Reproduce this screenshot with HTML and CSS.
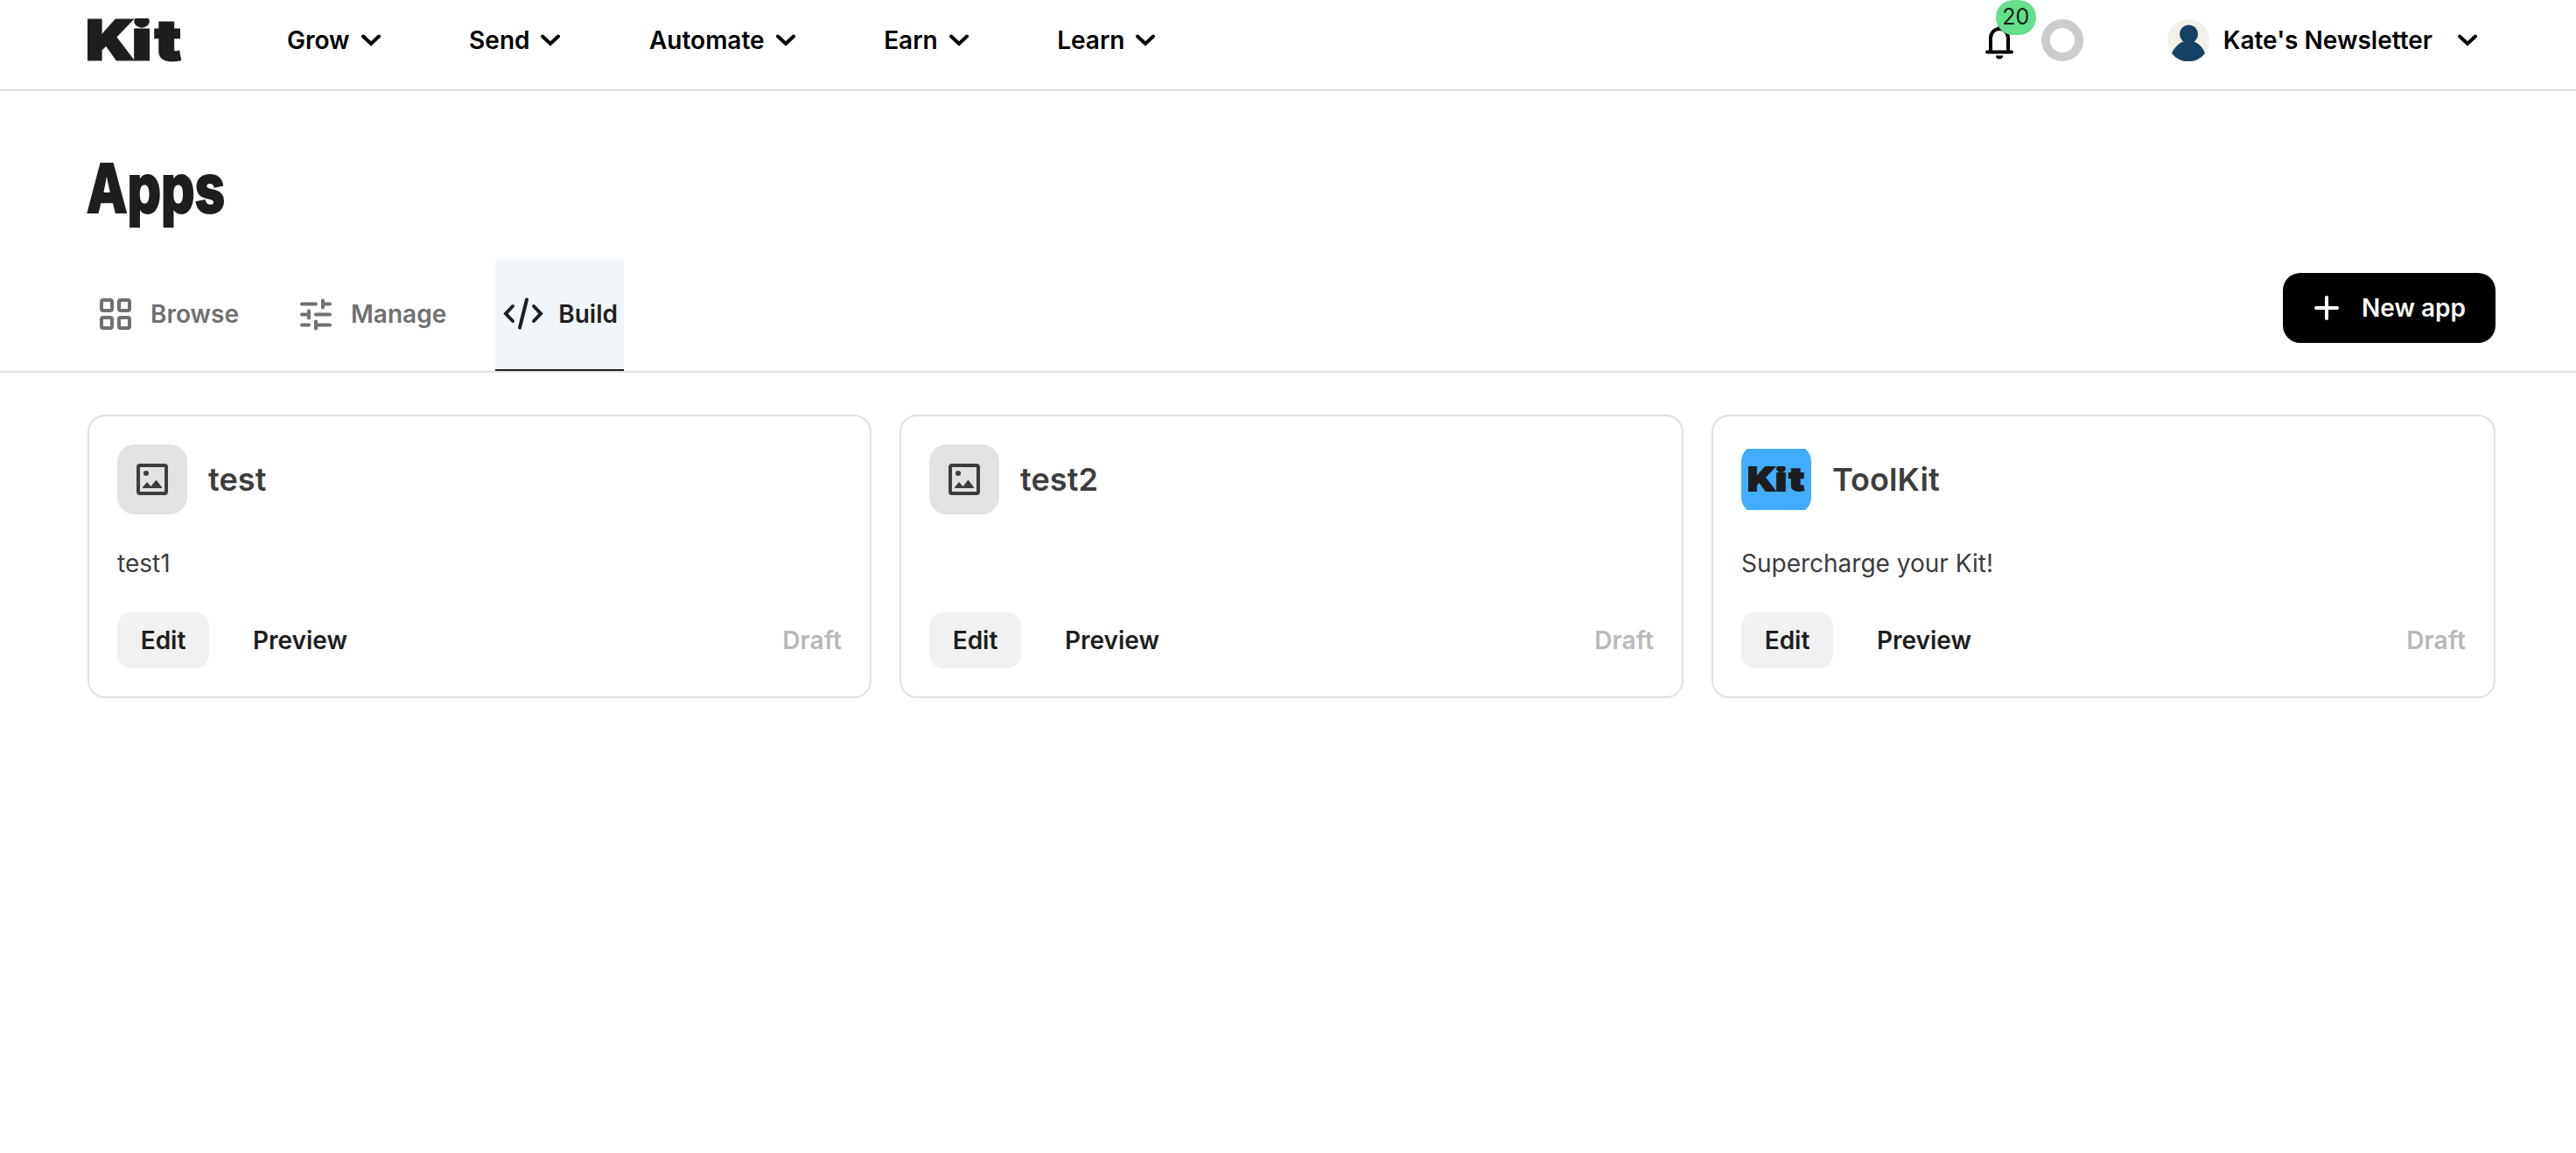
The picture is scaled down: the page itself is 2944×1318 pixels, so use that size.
FILE: index.html
```
<!DOCTYPE html>
<html lang="en">
<head>
    <meta charset="UTF-8">
    <meta name="viewport" content="width=device-width, initial-scale=1.0">
    <title>Apps</title>
    <link rel="stylesheet" href="styles.css">
</head>
<body>
    <svg class="sprite">
        <symbol id="chevron" viewBox="0 0 22 14">
            <path d="M2 2.500 L11 11 L20 2.500" fill="none" stroke="currentColor" stroke-width="4" stroke-linecap="round" stroke-linejoin="miter"/>
        </symbol>
        <symbol id="image" viewBox="0 0 36 36">
            <rect x="2" y="2" width="32" height="32" rx="2" fill="none" stroke="currentColor" stroke-width="4"/>
            <circle cx="11" cy="11" r="3" fill="currentColor"/>
            <path d="M7 27 L12 21 L16.5 26 L22.500 18.500 L29 27 V28 H7 Z" fill="currentColor"/>
        </symbol>
        <symbol id="kit" viewBox="0 0 108 50">
            <text class="kit-text" x="-2.500 43.500 65.500" y="46.500" transform="scale(1.18 1)">Kit</text>
        </symbol>
    </svg>

    <header class="header">
        <a class="logo" href="#"><svg width="108" height="50"><use href="#kit"/></svg></a>
        <nav class="nav">
            <a class="nav-item" href="#">Grow <svg class="chevron"><use href="#chevron"/></svg></a>
            <a class="nav-item" href="#">Send <svg class="chevron"><use href="#chevron"/></svg></a>
            <a class="nav-item" href="#">Automate <svg class="chevron"><use href="#chevron"/></svg></a>
            <a class="nav-item" href="#">Earn <svg class="chevron"><use href="#chevron"/></svg></a>
            <a class="nav-item" href="#">Learn <svg class="chevron"><use href="#chevron"/></svg></a>
        </nav>
        <div class="bell">
            <svg width="32" height="38" viewBox="0 0 32 38">
                <path d="M6 29 V13.500 A10 10.500 0 0 1 26 13.500 V29" fill="none" stroke="#000" stroke-width="4"/>
                <path d="M2 29.500 H30" stroke="#000" stroke-width="4" stroke-linecap="round"/>
                <path d="M12 33.500 H20 A4 4 0 0 1 12 33.500 Z" fill="#000"/>
                <path d="M16 0 V4" stroke="#000" stroke-width="4"/>
            </svg>
            <span class="badge">20</span>
        </div>
        <div class="ring"></div>
        <div class="account">
            <svg class="avatar" viewBox="0 0 48 48">
                <circle cx="24" cy="24" r="24" fill="#f3f0ea"/>
                <circle cx="24.500" cy="17" r="10.500" fill="#144264"/>
                <path d="M5 39 C8 32 13 27.500 18 25.500 H30 C36 27.500 40.500 32 43 39 A24 24 0 0 1 5 39 Z" fill="#144264"/>
            </svg>
            <span class="account-name">Kate's Newsletter</span>
            <svg class="chevron"><use href="#chevron"/></svg>
        </div>
    </header>

    <h1 class="title"><span>Apps</span></h1>

    <div class="toolbar">
        <div class="tabs">
            <a class="tab" href="#">
                <svg class="tab-icon" viewBox="0 0 48 48" fill="none" stroke="currentColor" stroke-width="4">
                    <rect x="8" y="8" width="12" height="12" rx="2"/>
                    <rect x="28" y="8" width="12" height="12" rx="2"/>
                    <rect x="8" y="28" width="12" height="12" rx="2"/>
                    <rect x="28" y="28" width="12" height="12" rx="2"/>
                </svg>
                Browse
            </a>
            <a class="tab" href="#">
                <svg class="tab-icon" viewBox="0 0 48 48" fill="none" stroke="currentColor" stroke-width="4" stroke-linecap="round">
                    <path d="M8 12.500 H24 M32 8.500 V16.500 M32 12.500 H40"/>
                    <path d="M8 24.500 H16 M16 20.500 V28.500 M24 24.500 H40"/>
                    <path d="M8 36.500 H16 M24 32.500 V40.500 M24 36.500 H40"/>
                </svg>
                Manage
            </a>
            <a class="tab active" href="#">
                <svg class="tab-icon" viewBox="0 0 48 48" fill="none" stroke="currentColor" stroke-width="4" stroke-linecap="round">
                    <path d="M12 15 L4 23.500 L12 32"/>
                    <path d="M28 7.500 L20 39.500"/>
                    <path d="M36 15 L44 23.500 L36 32"/>
                </svg>
                Build
            </a>
        </div>
        <button class="new-app">
            <svg width="28" height="28" viewBox="0 0 28 28"><path d="M14 2 V26 M2 14 H26" stroke="#fff" stroke-width="4" stroke-linecap="round"/></svg>
            New app
        </button>
    </div>

    <main class="cards">
        <div class="card">
            <div class="card-head">
                <div class="card-icon"><svg width="36" height="36"><use href="#image"/></svg></div>
                <h2>test</h2>
            </div>
            <p class="card-text">test1</p>
            <div class="card-foot">
                <button class="edit">Edit</button>
                <button class="preview">Preview</button>
                <span class="status">Draft</span>
            </div>
        </div>
        <div class="card">
            <div class="card-head">
                <div class="card-icon"><svg width="36" height="36"><use href="#image"/></svg></div>
                <h2>test2</h2>
            </div>
            <p class="card-text"></p>
            <div class="card-foot">
                <button class="edit">Edit</button>
                <button class="preview">Preview</button>
                <span class="status">Draft</span>
            </div>
        </div>
        <div class="card">
            <div class="card-head">
                <div class="card-icon card-icon-kit">
                    <div class="kit-tile"><svg width="65" height="30"><use href="#kit"/></svg></div>
                </div>
                <h2>ToolKit</h2>
            </div>
            <p class="card-text">Supercharge your Kit!</p>
            <div class="card-foot">
                <button class="edit">Edit</button>
                <button class="preview">Preview</button>
                <span class="status">Draft</span>
            </div>
        </div>
    </main>
</body>
</html>
```
FILE: styles.css
```
* {
    box-sizing: border-box;
}
body {
    margin: 0;
    font-family: Inter, sans-serif;
    font-size: 28px;
    color: #1e1e1e;
    background: #fff;
}
a {
    color: inherit;
    text-decoration: none;
}
svg {
    display: block;
    flex-shrink: 0;
}
.sprite {
    display: none;
}
.kit-text {
    font-family: Inter, sans-serif;
    font-size: 62px;
    font-weight: 900;
    fill: #1e1e1e;
    stroke: #1e1e1e;
    stroke-width: 3px;
}

/* header */
.header {
    display: flex;
    align-items: center;
    height: 104px;
    padding: 0 113px 10px 100px;
    border-bottom: 2px solid #e1e1e1;
    font-weight: 600;
    color: #000;
}
.logo {
    margin-right: 120px;
}
.nav {
    display: flex;
    gap: 101.5px;
}
.nav-item {
    display: flex;
    align-items: center;
    gap: 13px;
}
.chevron {
    width: 22px;
    height: 14px;
}
.bell {
    position: relative;
    margin-left: auto;
    padding-top: 5px;
}
.badge {
    position: absolute;
    left: 12px;
    top: -25px;
    width: 46px;
    height: 40px;
    border-radius: 20px;
    background: #64df8a;
    color: #1e1e1e;
    font-size: 25px;
    font-weight: 400;
    line-height: 39px;
    text-align: center;
}
.ring {
    width: 48px;
    height: 48px;
    margin: 0 96px 0 32px;
    border: 10px solid #ccc;
    border-radius: 50%;
}
.account {
    display: flex;
    align-items: center;
}
.avatar {
    width: 48px;
    height: 48px;
}
.account-name {
    margin: 0 29px 0 16px;
}

/* title */
.title {
    margin: 0;
    padding: 63px 99px 0;
    height: 192px;
    font-size: 77px;
    font-weight: 800;
    line-height: 96px;
    -webkit-text-stroke: 2px #1e1e1e;
}
.title span {
    display: inline-block;
    transform: scaleX(0.785);
    transform-origin: left;
}

/* tabs */
.toolbar {
    display: flex;
    justify-content: space-between;
    height: 130px;
    padding: 0 92px 0 100px;
    border-bottom: 2px solid #e1e1e1;
}
.tabs {
    display: flex;
    gap: 49px;
}
.tab {
    display: flex;
    align-items: center;
    gap: 16px;
    padding: 0 7px 0 8px;
    border-bottom: 2px solid transparent;
    font-weight: 600;
    color: #707070;
}
.tab.active {
    background: #f1f6fa;
    border-color: #1e1e1e;
    color: #1e1e1e;
}
.tab-icon {
    width: 48px;
    height: 48px;
}
button {
    border: none;
    font: inherit;
    font-weight: 600;
}
.new-app {
    display: flex;
    align-items: center;
    gap: 26px;
    width: 243px;
    height: 80px;
    margin-top: 16px;
    padding: 0 0 0 36px;
    border-radius: 20px;
    background: #000;
    color: #fff;
}

/* cards */
.cards {
    display: grid;
    grid-template-columns: repeat(3, 1fr);
    gap: 32px;
    padding: 48px 92px 0 100px;
}
.card {
    height: 324px;
    padding: 32px;
    border: 2px solid #e1e1e1;
    border-radius: 20px;
}
.card-head {
    display: flex;
    align-items: center;
    gap: 24px;
}
.card-head h2 {
    margin: 0;
    font-size: 36px;
    font-weight: 600;
    letter-spacing: 0.1px;
    color: #3d3d3d;
}
.card-icon {
    display: flex;
    align-items: center;
    justify-content: center;
    width: 80px;
    height: 80px;
    border-radius: 20px;
    background: #e2e2e2;
    color: #3d3d3d;
    overflow: hidden;
}
.card-icon-kit {
    background: none;
}
.kit-tile {
    display: flex;
    align-items: center;
    justify-content: center;
    width: 80px;
    height: 70px;
    background: #42adff;
}
.card-text {
    height: 40px;
    margin: 36px 0;
    line-height: 40px;
    color: #3d3d3d;
}
.card-foot {
    display: flex;
    align-items: center;
}
.edit,
.preview {
    height: 64px;
    padding: 0;
    border-radius: 16px;
    color: #1e1e1e;
}
.edit {
    width: 105px;
    margin-right: 50px;
    background: #f1f1f1;
}
.preview {
    background: none;
}
.status {
    margin-left: auto;
    font-weight: 600;
    letter-spacing: 0.2px;
    color: #b8b8b8;
}
```
